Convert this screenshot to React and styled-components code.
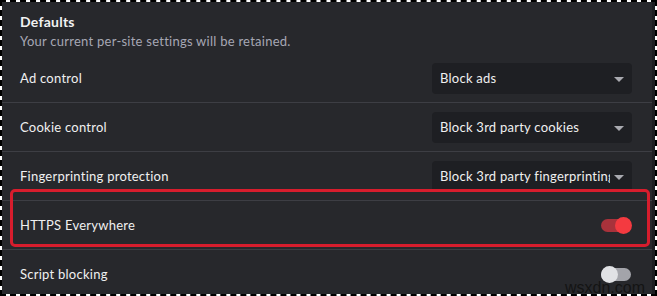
import React from "react";
import styled, { createGlobalStyle } from "styled-components";

const Global = createGlobalStyle`
  html, body { margin: 0; padding: 0; background: #fff; }
  body { font-family: Lato, "Noto Sans", sans-serif; }
`;

const Frame = styled.div`
  width: 657px;
  height: 296px;
  box-sizing: border-box;
  border: 2px dashed #000;
  background: #fff;
  overflow: hidden;
`;

const Panel = styled.div`
  position: relative;
  display: flex;
  height: 100%;
  background: #27282c;
  letter-spacing: 0.25px;
`;

const Content = styled.div`
  flex: 1;
  display: flex;
  flex-direction: column;
`;

const Scrollbar = styled.div`
  width: 3px;
  background: #1d1e22;
`;

const Header = styled.div`
  padding: 10px 18px 2px;
  display: flex;
  flex-direction: column;
`;

const Title = styled.div`
  font-size: 14px;
  font-weight: 700;
  line-height: 20px;
  color: #f2f2f2;
`;

const Subtitle = styled.div`
  font-size: 13px;
  line-height: 19px;
  color: #a6a7b4;
`;

const Row = styled.div`
  height: 48px;
  flex: none;
  display: flex;
  align-items: center;
  justify-content: space-between;
  padding: 0 20px 0 18px;
  border-top: 1px solid ${(p) => (p.$first ? "transparent" : "#3d3e44")};
`;

const Label = styled.div`
  font-size: 13px;
  color: #f0f0f0;
`;

const Select = styled.div`
  position: relative;
  width: 200px;
  height: 31px;
  box-sizing: border-box;
  background: #1e1f23;
  border-radius: 4px;
  display: flex;
  align-items: center;
  padding: 0 0 0 8px;
  font-size: 13px;
  color: #f0f0f0;
`;

const SelectText = styled.span`
  flex: 1;
  min-width: 0;
  overflow: hidden;
  white-space: nowrap;
  margin-right: 22px;
`;

const Caret = styled.span`
  position: absolute;
  right: 8px;
  top: 14px;
  width: 0;
  height: 0;
  border-left: 5px solid transparent;
  border-right: 5px solid transparent;
  border-top: 5px solid #a9aab0;
`;

const Toggle = styled.div`
  position: relative;
  width: 30px;
  height: 13px;
  border-radius: 7px;
  margin-right: 1px;
  background: ${(p) => (p.$on ? "#a8323b" : "#a3a4aa")};
`;

const Knob = styled.span`
  position: absolute;
  top: -2px;
  ${(p) => (p.$on ? "right: -1px;" : "left: 0;")}
  width: 17px;
  height: 17px;
  border-radius: 50%;
  background: ${(p) => (p.$on ? "#f43a40" : "#e1e2e5")};
`;

const Highlight = styled.div`
  position: absolute;
  left: 8px;
  top: 187px;
  width: 640px;
  height: 58px;
  box-sizing: border-box;
  border: 3px solid #d71d2d;
  border-radius: 5px;
  pointer-events: none;
`;

const Watermark = styled.div`
  position: absolute;
  right: 10px;
  bottom: -3px;
  font-family: Arial, "Liberation Sans", sans-serif;
  font-size: 16px;
  letter-spacing: 0;
  color: #141414;
`;

const rows = [
  { label: "Ad control", select: "Block ads" },
  { label: "Cookie control", select: "Block 3rd party cookies" },
  { label: "Fingerprinting protection", select: "Block 3rd party fingerprinting" },
  { label: "HTTPS Everywhere", toggle: true },
  { label: "Script blocking", toggle: false },
];

export default function App() {
  return (
    <>
      <Global />
      <Frame>
        <Panel>
          <Content>
            <Header>
              <Title>Defaults</Title>
              <Subtitle>Your current per-site settings will be retained.</Subtitle>
            </Header>
            {rows.map((r, i) => (
              <Row key={r.label} $first={i === 0}>
                <Label>{r.label}</Label>
                {r.select ? (
                  <Select>
                    <SelectText>{r.select}</SelectText>
                    <Caret />
                  </Select>
                ) : (
                  <Toggle $on={r.toggle}>
                    <Knob $on={r.toggle} />
                  </Toggle>
                )}
              </Row>
            ))}
          </Content>
          <Scrollbar />
          <Highlight />
          <Watermark>wsxdn.com</Watermark>
        </Panel>
      </Frame>
    </>
  );
}
